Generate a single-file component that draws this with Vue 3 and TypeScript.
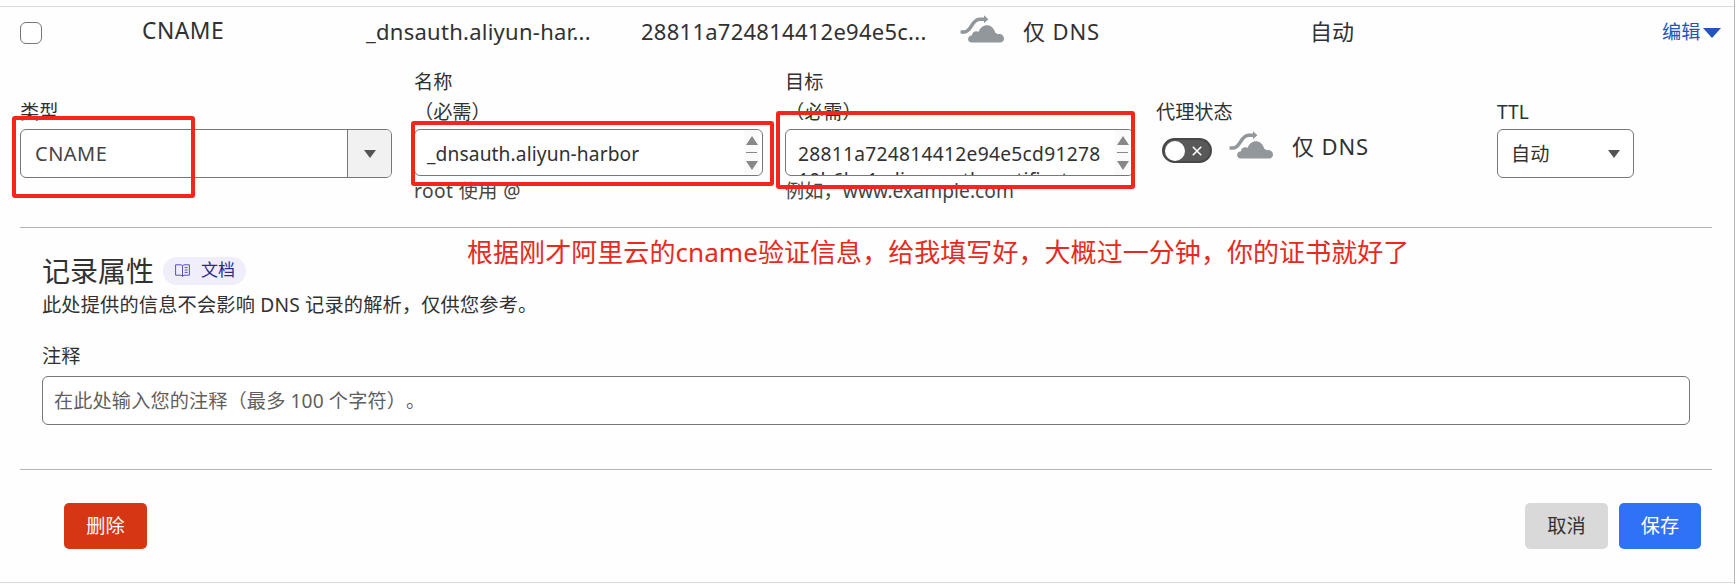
<script setup lang="ts">
import { ref } from 'vue'

const record = {
  type: 'CNAME',
  shortName: '_dnsauth.aliyun-har...',
  shortTarget: '28811a724814412e94e5c...',
  proxy: '仅 DNS',
  ttl: '自动',
}
const recordName = '_dnsauth.aliyun-harbor'
const targetLines = ['28811a724814412e94e5cd91278', '10b6ba1.aliyunauth.certificat']
const selected = ref(false)
const cloud =
  'M12 27.6 C7 27.6 6.6 20.8 12 20.2 C12.2 16.6 16 15.2 18.7 16.8 C21.6 7.8 33 8 35.2 17.8 C36.2 18 37 18.5 37.4 19.2 C41 18.2 44 20.6 44 23.6 C44 26.2 42 27.6 40 27.6 Z'
const shaft = 'M.6 16.9 H4.5 C11.5 16.9 11.5 4.3 19.5 4.2 H25'
const head = 'M24 .2 28.4 4.2 24 8.2 Z'
</script>

<template>
  <div class="page">
    <div class="panel">
      <div class="summary">
        <span class="check" :class="{ on: selected }" @click="selected = !selected"></span>
        <span class="c-type">{{ record.type }}</span>
        <span class="c-name">{{ record.shortName }}</span>
        <span class="c-target">{{ record.shortTarget }}</span>
        <svg class="cloud" viewBox="0 0 44 29"><path class="shaft" :d="shaft" /><path :d="head" /><path :d="cloud" /></svg>
        <span class="c-proxy">{{ record.proxy }}</span>
        <span class="c-ttl">{{ record.ttl }}</span>
        <a class="edit">编辑<i></i></a>
      </div>

      <div class="fields">
        <div class="field f-type">
          <label>类型</label>
          <div class="box select">
            <span class="value">{{ record.type }}</span>
            <span class="drop"><i class="caret"></i></span>
          </div>
          <div class="mark mark-type"></div>
        </div>
        <div class="field f-name">
          <label>名称<br />（必需）</label>
          <div class="box area">
            <div class="lines"><div>{{ recordName }}</div></div>
            <div class="scroll"><i class="up"></i><i class="bar"></i><i class="down"></i></div>
          </div>
          <div class="help h-name">root 使用 @</div>
          <div class="mark mark-name"></div>
        </div>
        <div class="field f-target">
          <label>目标<br />（必需）</label>
          <div class="box area">
            <div class="lines"><div v-for="l in targetLines" :key="l">{{ l }}</div></div>
            <div class="scroll"><i class="up"></i><i class="bar"></i><i class="down"></i></div>
          </div>
          <div class="help h-target">例如，www.example.com</div>
          <div class="mark mark-target"></div>
        </div>
        <div class="field f-proxy">
          <label>代理状态</label>
          <div class="proxy">
            <span class="toggle">
              <i class="knob"></i>
              <svg viewBox="0 0 10 10"><path d="M.8 .8 9.2 9.2M9.2 .8.8 9.2" /></svg>
            </span>
            <svg class="cloud" viewBox="0 0 44 29"><path class="shaft" :d="shaft" /><path :d="head" /><path :d="cloud" /></svg>
            <span class="proxy-text">{{ record.proxy }}</span>
          </div>
        </div>
        <div class="field f-ttl">
          <label>TTL</label>
          <div class="box ttl"><span>{{ record.ttl }}</span><i class="caret"></i></div>
        </div>
      </div>

      <section class="attrs">
        <div class="note">根据刚才阿里云的cname验证信息，给我填写好，大概过一分钟，你的证书就好了</div>
        <div class="head">
          <h2>记录属性</h2>
          <a class="badge">
            <svg viewBox="0 0 15 13">
              <path d="M.6 .8H6L7.5 1.8 9 .8H14.4V11.2H9L7.5 12.4 6 11.2H.6ZM7.5 1.8V12.2M9.6 3.6H12.6M9.6 6H12.6M9.6 8.4H12.6" />
            </svg>
            <span>文档</span>
          </a>
        </div>
        <p class="desc">此处提供的信息不会影响 DNS 记录的解析，仅供您参考。</p>
        <label class="comment-label">注释</label>
        <div class="comment">在此处输入您的注释（最多 100 个字符）。</div>
      </section>

      <div class="actions">
        <button class="delete">删除</button>
        <span class="spacer"></span>
        <button class="cancel">取消</button>
        <button class="save">保存</button>
      </div>
    </div>
  </div>
</template>

<style>
body {
  background: #fff;
  overflow: hidden;
}
</style>

<style scoped>
.page,
.page * {
  box-sizing: border-box;
}
.page {
  width: 1736px;
  height: 584px;
  padding-top: 6px;
  background: #fefefe;
  color: #313131;
  font: 19.2px/30px 'Noto Sans', 'Noto Sans CJK SC', sans-serif;
  text-spacing-trim: space-all;
}
.panel {
  width: 1735px;
  height: 577px;
  border-top: 1px solid #d9d9d9;
  border-bottom: 1px solid #d9d9d9;
  position: relative;
}
.panel::after {
  content: '';
  position: absolute;
  right: 0;
  top: -7px;
  width: 1px;
  height: 584px;
  background: #b6b6b6;
}
.summary {
  height: 62px;
  display: grid;
  grid-template-columns: 122px 224px 275px 319px 63px 287px 352px 1fr;
  padding-left: 20px;
  font-size: 22px;
  line-height: 32px;
  padding-top: 8px;
  white-space: nowrap;
}
.check {
  width: 22px;
  height: 22px;
  margin-top: 7px;
  border: 1px solid #777;
  border-radius: 6px;
  background: #fff;
}
.check.on {
  background: #2255bb;
}
.c-type {
  font-size: 22.8px;
  letter-spacing: 0.5px;
}
.c-name,
.c-target {
  letter-spacing: 0.26px;
}
.c-proxy,
.proxy-text {
  letter-spacing: 0.9px;
}
.cloud {
  width: 44px;
  height: 29px;
  fill: #92979b;
  display: block;
}
.shaft {
  fill: none;
  stroke: #92979b;
  stroke-width: 3.5;
}
.edit {
  color: #2255bb;
  font-size: 19.2px;
  display: flex;
  align-items: center;
  height: 33px;
  gap: 3px;
}
.edit i {
  border: 9px solid transparent;
  border-top: 10px solid #2255bb;
  border-bottom: 0;
  margin-top: 3px;
}
.fields {
  display: grid;
  grid-template-columns: 394px 371px 371px 341px 137px;
  padding-left: 20px;
  height: 158px;
}
.field {
  position: relative;
  display: flex;
  flex-direction: column;
}
.field label {
  height: 60px;
  padding-bottom: 2px;
  display: flex;
  align-items: flex-end;
  line-height: 30px;
}
.box {
  border: 1px solid #777;
  border-radius: 6px;
  background: #fff;
  display: flex;
  flex: none;
}
.select {
  width: 372px;
  height: 49px;
  overflow: hidden;
}
.value {
  flex: 1;
  padding-left: 14px;
  line-height: 47px;
  color: #444;
  font-size: 20px;
  letter-spacing: 0.5px;
}
.drop {
  width: 44px;
  border-left: 1px solid #777;
  background: #f1f1f1;
  display: flex;
  align-items: center;
  justify-content: center;
}
.caret {
  border: 6px solid transparent;
  border-top: 8px solid #555;
  border-bottom: 0;
}
.area {
  width: 349px;
  height: 47px;
  overflow: hidden;
  padding: 11px 3px 0 12px;
  position: relative;
}
.lines {
  flex: 1;
  line-height: 26px;
  white-space: nowrap;
  letter-spacing: 0.28px;
}
.f-name .lines {
  letter-spacing: 0.1px;
}
.scroll {
  width: 15px;
  height: 45px;
  margin-top: -11px;
  background: #fafafa;
  display: flex;
  flex: none;
  flex-direction: column;
  align-items: center;
  padding-top: 6px;
}
.up {
  border: 6px solid transparent;
  border-bottom: 9px solid #888;
  border-top: 0;
}
.down {
  border: 6px solid transparent;
  border-top: 9px solid #888;
  border-bottom: 0;
}
.bar {
  width: 11px;
  height: 1px;
  background: #888;
  margin: 7px 0 8px;
}
.help {
  line-height: 29px;
  color: #454545;
  white-space: nowrap;
}
.h-name {
  letter-spacing: 0.4px;
}
.h-target {
  letter-spacing: 0.06px;
}
.mark {
  position: absolute;
  border: 4px solid #f4251a;
  border-radius: 3px;
}
.mark-type {
  left: -8px;
  top: 47px;
  width: 183px;
  height: 82px;
}
.mark-name {
  left: -3px;
  top: 52px;
  width: 363px;
  height: 65px;
}
.mark-target {
  left: -9px;
  top: 42px;
  width: 359px;
  height: 78px;
}
.proxy {
  display: flex;
  height: 49px;
  padding-left: 6px;
}
.toggle {
  width: 50px;
  height: 25px;
  border-radius: 13px;
  background: #595959;
  border: 2px solid #474747;
  margin-top: 9px;
  display: flex;
  align-items: center;
  justify-content: space-between;
  padding: 0 8px 0 1px;
}
.knob {
  width: 20px;
  height: 20px;
  border-radius: 50%;
  background: #fff;
}
.toggle svg {
  width: 10px;
  height: 10px;
  stroke: #fff;
  stroke-width: 1.6;
}
.proxy .cloud {
  margin: 2px 19px 0 17px;
}
.proxy-text {
  font-size: 22px;
  line-height: 35px;
}
.ttl {
  width: 137px;
  height: 49px;
  align-items: center;
  justify-content: space-between;
  padding: 0 13px 0 13px;
}
.attrs {
  position: relative;
  margin: 0 23px 0 20px;
  height: 242px;
  border-top: 1px solid #b5b5b5;
  padding: 26px 22px 0;
}
.note {
  position: absolute;
  left: 447px;
  top: 5px;
  font-size: 26px;
  line-height: 38px;
  letter-spacing: 0.06px;
  color: #e62a20;
  white-space: nowrap;
}
.head {
  display: flex;
  align-items: center;
  height: 34px;
}
h2 {
  margin: 0;
  font-size: 28px;
  line-height: 34px;
  font-weight: 400;
}
.badge {
  margin: -1px 0 0 9px;
  width: 83px;
  height: 28px;
  border-radius: 14px;
  background: #f1eefc;
  color: #2c2a8a;
  font-size: 17px;
  line-height: 26px;
  display: flex;
  align-items: center;
  padding-left: 12px;
  gap: 11px;
}
.badge span {
  margin-top: -2px;
}
.badge svg {
  width: 15px;
  height: 13px;
  fill: none;
  stroke: #5450b8;
}
.desc {
  margin: 1px 0 0;
  line-height: 32px;
  letter-spacing: 0.18px;
}
.comment-label {
  display: block;
  margin-top: 20px;
  height: 35px;
  line-height: 30px;
}
.comment {
  height: 49px;
  border: 1px solid #777;
  border-radius: 6px;
  background: #fff;
  color: #5f5f5f;
  line-height: 48px;
  padding-left: 11px;
  letter-spacing: 0.1px;
}
.actions {
  margin: 0 23px 0 20px;
  border-top: 1px solid #b5b5b5;
  padding: 33px 11px 0 44px;
  display: flex;
}
.spacer {
  flex: 1;
}
button {
  width: 83px;
  height: 46px;
  border: 0;
  border-radius: 5px;
  font: inherit;
  padding: 0;
}
.delete {
  background: #d63613;
  color: #fff;
}
.cancel {
  background: #d9d9d9;
  color: #313131;
  margin-right: 11px;
}
.save {
  width: 82px;
  background: #2f72f8;
  color: #fff;
}
</style>
